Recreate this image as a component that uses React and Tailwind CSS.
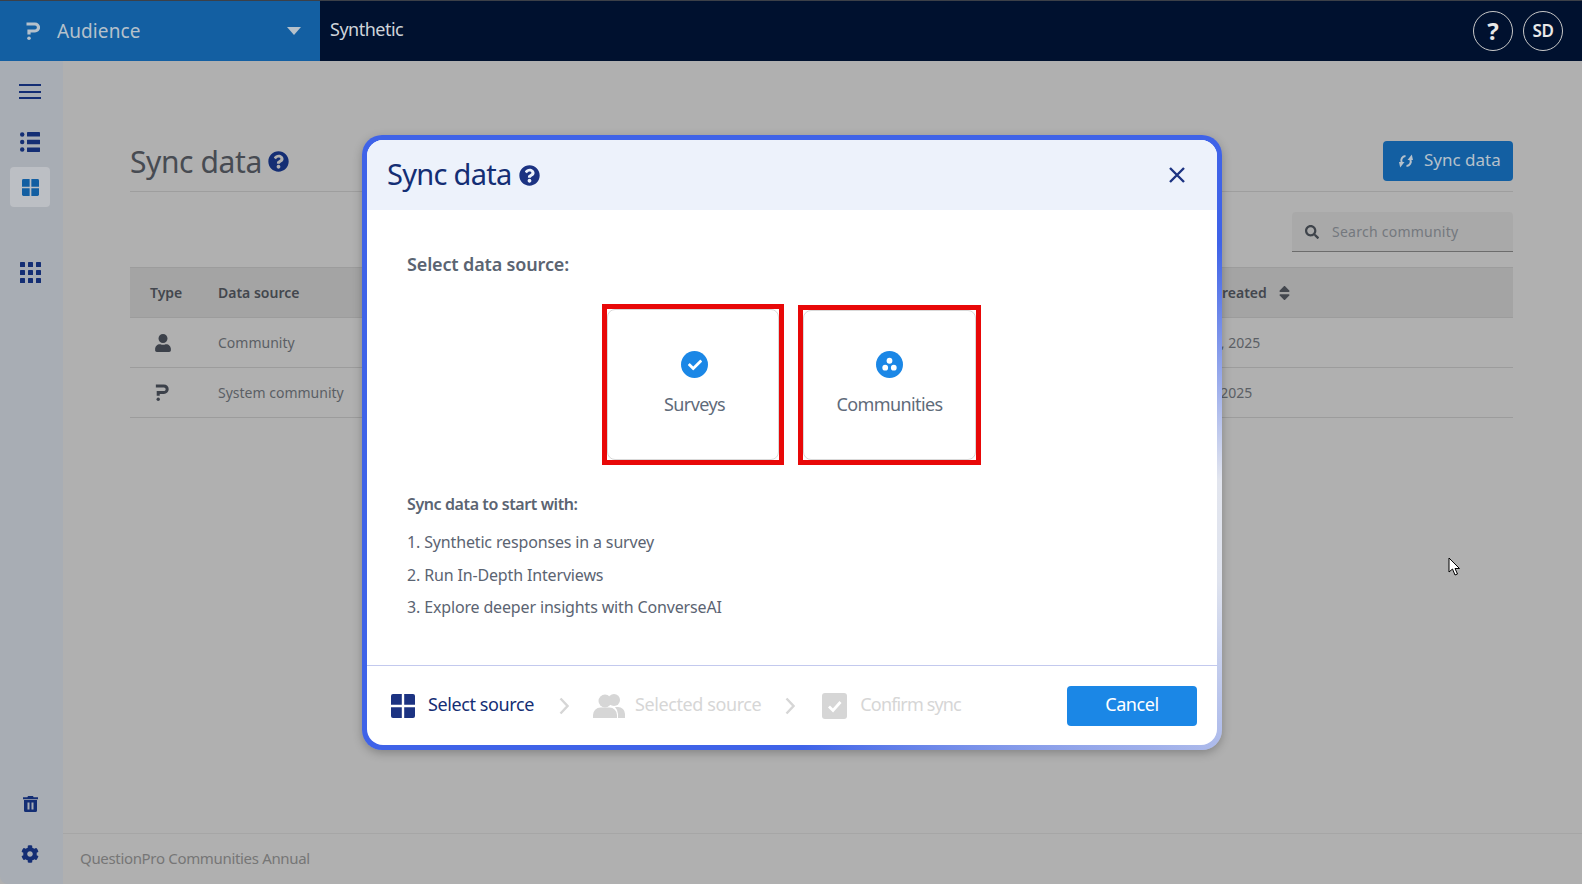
import { FaQuestionCircle, FaCog, FaSearch, FaSort, FaCheck, FaUser } from 'react-icons/fa'

const font = { fontFamily: '"Noto Sans", "Open Sans", sans-serif' }

function Logo({ className }) {
  return (
    <svg viewBox="0 0 14 18" className={className} fill="none" stroke="currentColor">
      <path d="M0.5 2 H9 A3.500 3.500 0 0 1 9 9 H3 V12.500" strokeWidth="3.200" />
      <circle cx="3" cy="16.200" r="1.800" fill="currentColor" stroke="none" />
    </svg>
  )
}

function Tiles({ className }) {
  return (
    <svg viewBox="0 0 24 24" className={className} fill="currentColor">
      <path d="M2 0h8.800v10.800H0V2a2 2 0 0 1 2-2z" />
      <path d="M13.200 0H22a2 2 0 0 1 2 2v8.800H13.200z" />
      <path d="M0 13.200h10.800V24H2a2 2 0 0 1-2-2z" />
      <path d="M13.200 13.200H24V22a2 2 0 0 1-2 2h-8.800z" />
    </svg>
  )
}

function Apps({ className }) {
  const cells = [0, 8, 16]
  return (
    <svg viewBox="0 0 21 21" className={className} fill="currentColor">
      {cells.map(y => cells.map(x => <rect key={`${x}-${y}`} x={x} y={y} width="5" height="5" rx="0.600" />))}
    </svg>
  )
}

function ListIcon({ className }) {
  return (
    <svg viewBox="0 0 20 20" className={className} fill="currentColor">
      <circle cx="2.200" cy="2.500" r="2.200" />
      <circle cx="2.200" cy="10" r="2.200" />
      <circle cx="2.200" cy="17.500" r="2.200" />
      <rect x="7" y="0" width="13" height="4.600" rx="0.400" />
      <rect x="7" y="7.700" width="13" height="4.600" rx="0.400" />
      <rect x="7" y="15.400" width="13" height="4.600" rx="0.400" />
    </svg>
  )
}

function Trash({ className }) {
  return (
    <svg viewBox="0 0 15 16" className={className} fill="currentColor">
      <path d="M5 0h5l.6 1.200H15v2H0v-2h4.400z" />
      <path fillRule="evenodd" d="M1 4h13v10.500a1.500 1.500 0 0 1-1.500 1.500h-10A1.500 1.500 0 0 1 1 14.500zM4.500 6.500v7h2v-7zM8.500 6.500v7h2v-7z" />
    </svg>
  )
}

function SyncIcon({ className }) {
  return (
    <svg viewBox="0 0 14 14" className={className} fill="currentColor">
      <path d="M6.500 2 A4.500 4.500 0 0 0 2.700 8.500" fill="none" stroke="currentColor" strokeWidth="2" />
      <polygon points="0,8 5.500,8 1.200,13.500" />
      <path d="M7.500 12 A4.500 4.500 0 0 0 11.300 5.500" fill="none" stroke="currentColor" strokeWidth="2" />
      <polygon points="14,6 8.500,6 12.800,0.500" />
    </svg>
  )
}

function Users({ className }) {
  return (
    <svg viewBox="0 0 32 24" className={className} fill="currentColor">
      <circle cx="21" cy="6" r="6" />
      <path d="M25 24h7v-4a7 7 0 0 0-7-7h-3a11 11 0 0 1 3 7z" />
      <circle cx="12" cy="7" r="6.500" />
      <path d="M0 24v-3a7.500 7.500 0 0 1 7.500-7.500h9A7.500 7.500 0 0 1 24 21v3z" />
    </svg>
  )
}

function CheckBox({ className }) {
  return (
    <svg viewBox="0 0 25 26" className={className}>
      <rect width="25" height="26" rx="3" fill="currentColor" />
      <path d="M7 13.500l4 4 7.500-8.500" fill="none" stroke="#fff" strokeWidth="2.800" />
    </svg>
  )
}

function Chevron() {
  return (
    <svg viewBox="0 0 10 18" className="w-[10px] h-[18px] shrink-0 text-[#d6d6d6]" fill="none" stroke="currentColor" strokeWidth="2.400">
      <path d="M1.500 1.500 L8.500 9 L1.500 16.500" />
    </svg>
  )
}

function Cursor() {
  return (
    <svg viewBox="0 0 12 20" className="absolute left-[1447px] top-[556px] w-[14px] h-[20px]">
      <path d="M1 1 V15 L4.500 12 L7 18 L9.500 17 L7 11.500 H11.500 Z" fill="#fff" stroke="#000" strokeWidth="1" />
    </svg>
  )
}

function SourceCard({ label, size, inner, children }) {
  return (
    <div className={`border-[5px] border-[#e80808] ${size}`}>
      <div className={`h-full rounded-lg border border-[#d9d9d9] flex flex-col items-center ${inner}`}>
        <div className="w-[27px] h-[27px] rounded-full bg-[#1b87e6] text-white flex items-center justify-center">
          {children}
        </div>
        <div className="mt-[13px] text-[18px] leading-[27px] text-[#5f6b7a] tracking-[-0.6px]">{label}</div>
      </div>
    </div>
  )
}

const rows = [
  { icon: <FaUser className="w-[18px] h-[18px]" />, source: 'Community', date: 'Jun 13, 2025' },
  { icon: <Logo className="w-[14px] h-[17px] ml-[1px]" />, source: 'System community', date: 'Jun 3, 2025' },
]

export default function App() {
  return (
    <div className="relative w-[1582px] h-[884px] overflow-hidden bg-[#b0b0b0] flex flex-col border-t border-[#3c4048]" style={font}>
      <header className="h-[60px] shrink-0 flex bg-[#00112f]">
        <div className="w-[320px] bg-[#135fa2] flex items-center pl-[26px] pr-[19px] text-[#b6c1cb]">
          <Logo className="w-[14px] h-[18px]" />
          <span className="ml-[17px] text-[19px] tracking-[0.1px]">Audience</span>
          <span className="ml-auto w-0 h-0 border-x-[7px] border-x-transparent border-t-[8px] border-t-[#b6c1cb]" />
        </div>
        <div className="pl-[10px] flex items-center text-[#cfd4da] text-[18px] tracking-[-0.5px] pb-[3px]">Synthetic</div>
        <div className="ml-auto flex items-center gap-[10px] pr-[19px] text-[#e8e8e8]">
          <div className="w-[40px] h-[40px] rounded-full border border-[#c8c8c8] flex items-center justify-center text-[24px] font-bold">?</div>
          <div className="w-[40px] h-[40px] rounded-full border border-[#c8c8c8] flex items-center justify-center text-[17px] font-semibold tracking-[-0.3px]">SD</div>
        </div>
      </header>

      <div className="flex-1 flex min-h-0">
        <aside className="w-[63px] shrink-0 bg-[#a8adb4] rounded-bl-lg flex flex-col items-center text-[#142e74] pt-[23px] pb-[21px] pr-[3px]">
          <div className="w-[22px] h-[15px] flex flex-col justify-between">
            <span className="h-[2px] bg-[#142e74]" />
            <span className="h-[2px] bg-[#142e74]" />
            <span className="h-[2px] bg-[#142e74]" />
          </div>
          <ListIcon className="w-[20px] h-[20px] mt-[33px]" />
          <div className="mt-[15px] w-[40px] h-[40px] rounded bg-[#bcbfc4] flex items-center justify-center text-[#135fa2]">
            <Tiles className="w-[17px] h-[17px]" />
          </div>
          <Apps className="w-[21px] h-[21px] mt-[55px]" />
          <Trash className="w-[15px] h-[16px] mt-auto" />
          <FaCog className="w-[18px] h-[18px] mt-[33px]" />
        </aside>

        <main className="flex-1 flex flex-col min-w-0">
          <div className="flex-1 pl-[67px] pr-[69px] pt-[80px]">
            <div className="h-[51px] flex items-start justify-between border-b border-[#9e9e9e]">
              <div className="flex items-center gap-[6px] h-[40px]">
                <h1 className="text-[30px] leading-[38px] pt-[1px] text-[#474b52] tracking-[-0.4px]">Sync data</h1>
                <FaQuestionCircle className="w-[21px] h-[21px] text-[#142e74]" />
              </div>
              <button className="w-[130px] h-[40px] rounded bg-[#135fa2] text-[#b6c1cb] flex items-center pl-[16px] gap-[11px] text-[17px] pb-[2px]">
                <SyncIcon className="w-[14px] h-[14px] mt-[2px]" />
                Sync data
              </button>
            </div>
            <div className="flex justify-end mt-[20px]">
              <div className="w-[221px] h-[40px] bg-[#a9a9a9] border-b border-[#6c6c6c] flex items-center pl-[13px] rounded-t-sm">
                <FaSearch className="w-[14px] h-[14px] text-[#3f444b]" />
                <span className="ml-[13px] text-[14px] text-[#74787e] tracking-[0.25px]">Search community</span>
              </div>
            </div>
            <div className="mt-[15px] text-[14px] text-[#5b5f65]">
              <div className="h-[51px] bg-[#a4a4a4] border-y border-[#9c9c9c] flex items-center font-semibold text-[#43474e]">
                <div className="w-[88px] pl-[20px]">Type</div>
                <div className="w-[961px]">Data source</div>
                <div className="flex items-center gap-[11px]">
                  Date created
                  <FaSort className="w-[13px] h-[18px] text-[#43474e]" />
                </div>
              </div>
              {rows.map(r => (
                <div key={r.source} className="h-[50px] border-b border-[#9c9c9c] flex items-center">
                  <div className="w-[88px] pl-[24px] text-[#3c414a]">{r.icon}</div>
                  <div className="w-[962px]">{r.source}</div>
                  <div>{r.date}</div>
                </div>
              ))}
            </div>
          </div>
          <footer className="h-[51px] shrink-0 border-t border-[#a6a6a6] flex items-center pl-[17px] text-[15px] text-[#767676] tracking-[-0.33px] pb-[2px]">
            QuestionPro Communities Annual
          </footer>
        </main>
      </div>

      <div className="absolute left-[362px] top-[134px] w-[860px] h-[615px] rounded-[20px] p-[5px] shadow-[0_3px_10px_rgba(0,0,0,0.25)] bg-[conic-gradient(#3f63e8_0deg,#3f63e8_65deg,#e2e5ee_95deg,#dfe3ee_108deg,#a0b0ea_130deg,#3f63e8_178deg,#3f63e8_360deg)]">
        <div className="h-full rounded-[16px] overflow-hidden bg-white flex flex-col">
          <div className="h-[70px] shrink-0 bg-[#edf2fb] flex items-center pl-[20px] pr-[32px] text-[#142e74]">
            <h2 className="text-[29px] leading-[38px] pb-[2px] tracking-[-0.7px]">Sync data</h2>
            <FaQuestionCircle className="w-[21px] h-[21px] ml-[7px] text-[#1c3382]" />
            <svg viewBox="0 0 16 16" className="w-[16px] h-[16px] ml-auto text-[#1c3382]" fill="none" stroke="currentColor" strokeWidth="2.400">
              <path d="M1 1 L15 15 M15 1 L1 15" />
            </svg>
          </div>
          <div className="flex-1 pt-[41px] px-[40px] text-[#5b6472]">
            <div className="text-[18px] leading-[27px] font-semibold tracking-[-0.15px]">Select data source:</div>
            <div className="flex justify-center items-end gap-[14px] mt-[26px] pr-[1px]">
              <SourceCard label="Surveys" size="w-[182px] h-[161px]" inner="pt-[41px] pl-[3px]">
                <FaCheck className="w-[14px] h-[14px]" />
              </SourceCard>
              <SourceCard label="Communities" size="w-[183px] h-[160px]" inner="pt-[40px]">
                <svg viewBox="0 0 14 14" className="w-[15px] h-[15px]" fill="currentColor">
                  <circle cx="7" cy="3.500" r="2.700" />
                  <circle cx="3" cy="10" r="2.700" />
                  <circle cx="11" cy="10" r="2.700" />
                </svg>
              </SourceCard>
            </div>
            <div className="mt-[27px] text-[16px] leading-[24px] font-semibold tracking-[-0.4px]">Sync data to start with:</div>
            <ol className="mt-[14px] text-[16px] leading-[24px] flex flex-col gap-[8.500px] tracking-[-0.15px]">
              <li>1. Synthetic responses in a survey</li>
              <li>2. Run In-Depth Interviews</li>
              <li>3. Explore deeper insights with ConverseAI</li>
            </ol>
          </div>
          <div className="h-[80px] shrink-0 border-t border-[#c3c9ee] flex items-center pl-[24px] pr-[20px] text-[18px] tracking-[-0.4px]">
            <Tiles className="w-[24px] h-[24px] text-[#1c3382]" />
            <span className="ml-[13px] pb-[2px] text-[#142e74]">Select source</span>
            <span className="ml-[25px]"><Chevron /></span>
            <Users className="w-[32px] h-[24px] ml-[24px] text-[#d6d6d6]" />
            <span className="ml-[10px] pb-[2px] text-[#d6d6d6]">Selected source</span>
            <span className="ml-[24px]"><Chevron /></span>
            <CheckBox className="w-[25px] h-[26px] ml-[27px] text-[#d6d6d6]" />
            <span className="ml-[13px] pb-[2px] text-[#d6d6d6] tracking-[-0.85px]">Confirm sync</span>
            <button className="ml-auto w-[130px] h-[40px] rounded bg-[#1b87e6] text-white text-[18px] pb-[2px]">Cancel</button>
          </div>
        </div>
      </div>

      <Cursor />
    </div>
  )
}
